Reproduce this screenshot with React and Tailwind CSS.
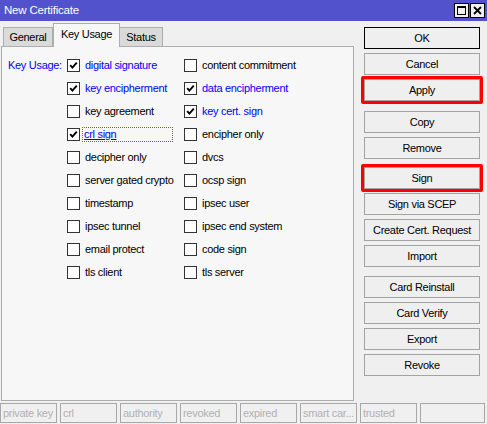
import React from 'react';

const COL1 = [
  { label: 'digital signature', on: true },
  { label: 'key encipherment', on: true },
  { label: 'key agreement' },
  { label: 'crl sign', on: true, focus: true },
  { label: 'decipher only' },
  { label: 'server gated crypto' },
  { label: 'timestamp' },
  { label: 'ipsec tunnel' },
  { label: 'email protect' },
  { label: 'tls client' },
];

const COL2 = [
  { label: 'content commitment' },
  { label: 'data encipherment', on: true },
  { label: 'key cert. sign', on: true },
  { label: 'encipher only' },
  { label: 'dvcs' },
  { label: 'ocsp sign' },
  { label: 'ipsec user' },
  { label: 'ipsec end system' },
  { label: 'code sign' },
  { label: 'tls server' },
];

const STATUS = ['private key', 'crl', 'authority', 'revoked', 'expired', 'smart car...', 'trusted'];

function CheckBox({ checked }) {
  return (
    <span className="w-[13px] h-[13px] border border-[#333333] bg-white flex items-center justify-center shrink-0">
      {checked && (
        <svg width="9" height="9" viewBox="0 0 9 9">
          <path d="M1.2 4.2 L3.4 6.6 L7.8 1.6" stroke="#000" strokeWidth="1.9" fill="none" />
        </svg>
      )}
    </span>
  );
}

function Item({ label, on, focus }) {
  return (
    <div className="flex items-center gap-[3px]">
      <CheckBox checked={on} />
      <span
        className={`leading-[13px] px-[1px] ${on ? 'text-[#0000ff]' : 'text-black'} ${
          focus ? 'underline border border-dotted border-[#6b6b2a] w-[91px] -ml-px' : 'border border-transparent'
        }`}
      >
        {label}
      </span>
    </div>
  );
}

function Btn({ children, def, mark, className = '' }) {
  return (
    <div className={`relative ${className}`}>
      <div
        className={`h-[22px] flex items-center justify-center bg-[#efefef] border ${
          def ? 'border-black' : 'border-[#a3a3a3]'
        }`}
      >
        {children}
      </div>
      {mark && <div className="absolute -inset-[3px] border-[3px] border-[#ff0000] rounded-[2px]" />}
    </div>
  );
}

export default function App() {
  return (
    <div className="w-[487px] h-[424px] bg-[#f0f0f0] flex flex-col overflow-hidden font-['Liberation_Sans',Arial,sans-serif] text-[11px] tracking-[-0.3px] text-black">
      {/* title bar */}
      <div className="h-[21px] bg-[#5252cc] flex items-center justify-between pl-[4px] pr-[2px] shrink-0">
        <span className="text-white text-[11.5px] tracking-[-0.2px]">New Certificate</span>
        <div className="flex gap-[1px]">
          <div className="w-[15px] h-[15px] bg-[#f0f0f0] border border-black flex items-center justify-center">
            <div className="w-[9px] h-[9px] border border-black border-t-2" />
          </div>
          <div className="w-[15px] h-[15px] bg-[#f0f0f0] border border-black flex items-center justify-center">
            <svg width="9" height="9" viewBox="0 0 9 9">
              <path d="M1 1 L8 8 M8 1 L1 8" stroke="#000" strokeWidth="1.8" />
            </svg>
          </div>
        </div>
      </div>

      <div className="flex h-[380px] shrink-0">
        {/* left: tabs + panel */}
        <div className="w-[354px] pl-[1px] flex flex-col">
          <div className="h-[25px] flex items-end pl-[2px] relative z-10">
            <div className="w-[50px] h-[19px] bg-[#dadada] border border-b-0 border-[#adadad] flex items-center justify-center">
              General
            </div>
            <div className="w-[67px] h-[24px] -mb-px bg-[#f7f7f7] border border-b-0 border-[#adadad] flex items-center justify-center pb-[2px]">
              Key Usage
            </div>
            <div className="w-[43px] h-[19px] bg-[#dadada] border border-b-0 border-l-0 border-[#adadad] flex items-center justify-center">
              Status
            </div>
          </div>
          <div className="flex-1 bg-[#f7f7f7] border border-[#adadad] pt-[7px] pl-[6px]">
            <div className="flex">
              <div className="w-[59px] h-[23px] flex items-center text-[#0000ff]">Key Usage:</div>
              <div className="w-[117px] flex flex-col">
                {COL1.map((it) => (
                  <div key={it.label} className="h-[23px] flex items-center">
                    <Item {...it} />
                  </div>
                ))}
              </div>
              <div className="flex flex-col">
                {COL2.map((it) => (
                  <div key={it.label} className="h-[23px] flex items-center">
                    <Item {...it} />
                  </div>
                ))}
              </div>
            </div>
          </div>
        </div>

        {/* right: buttons */}
        <div className="ml-[10px] w-[116px] pt-[6px] flex flex-col">
          <Btn def>OK</Btn>
          <Btn className="mt-[4px]">Cancel</Btn>
          <Btn className="mt-[4px]" mark>Apply</Btn>
          <Btn className="mt-[10px]">Copy</Btn>
          <Btn className="mt-[4px]">Remove</Btn>
          <Btn className="mt-[8px]" mark>Sign</Btn>
          <Btn className="mt-[4px]">Sign via SCEP</Btn>
          <Btn className="mt-[4px]">Create Cert. Request</Btn>
          <Btn className="mt-[4px]">Import</Btn>
          <Btn className="mt-[9px]">Card Reinstall</Btn>
          <Btn className="mt-[4px]">Card Verify</Btn>
          <Btn className="mt-[4px]">Export</Btn>
          <Btn className="mt-[4px]">Revoke</Btn>
        </div>
      </div>

      {/* status bar */}
      <div className="flex gap-[3px] pt-[2px]">
        {STATUS.map((s) => (
          <div
            key={s}
            className="w-[57px] h-[20px] border border-[#a8a8a8] text-[#b0b0b0] pl-[2px] flex items-center overflow-hidden whitespace-nowrap"
          >
            {s}
          </div>
        ))}
        <div className="w-[65px] h-[20px] border border-[#a8a8a8]" />
      </div>
    </div>
  );
}
